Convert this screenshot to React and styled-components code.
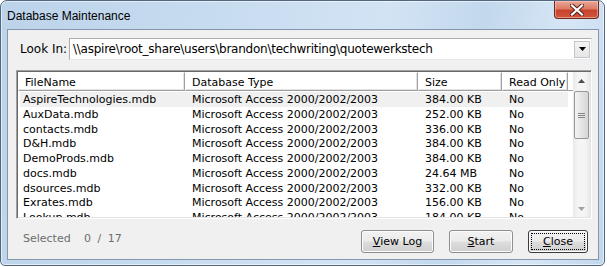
import styled, { createGlobalStyle } from "styled-components";

const GlobalStyle = createGlobalStyle`
  body {
    margin: 0;
    background: #ffffff;
  }
`;

const files = [
  { name: "AspireTechnologies.mdb", type: "Microsoft Access 2000/2002/2003", size: "384.00 KB", ro: "No" },
  { name: "AuxData.mdb", type: "Microsoft Access 2000/2002/2003", size: "252.00 KB", ro: "No" },
  { name: "contacts.mdb", type: "Microsoft Access 2000/2002/2003", size: "336.00 KB", ro: "No" },
  { name: "D&H.mdb", type: "Microsoft Access 2000/2002/2003", size: "384.00 KB", ro: "No" },
  { name: "DemoProds.mdb", type: "Microsoft Access 2000/2002/2003", size: "384.00 KB", ro: "No" },
  { name: "docs.mdb", type: "Microsoft Access 2000/2002/2003", size: "24.64 MB", ro: "No" },
  { name: "dsources.mdb", type: "Microsoft Access 2000/2002/2003", size: "332.00 KB", ro: "No" },
  { name: "Exrates.mdb", type: "Microsoft Access 2000/2002/2003", size: "156.00 KB", ro: "No" },
  { name: "Lookup.mdb", type: "Microsoft Access 2000/2002/2003", size: "184.00 KB", ro: "No" },
];

const App = () => {
  return (
    <>
      <GlobalStyle />
      <Window>
        <TitleBar>
          <Title>Database Maintenance</Title>
          <CloseCaption>
            <svg width="14" height="12" viewBox="0 0 14 12">
              <path d="M2 1.5 L12 10.5 M12 1.5 L2 10.5" stroke="#5a2418" strokeWidth="4.2" strokeLinecap="square" />
              <path d="M2 1.5 L12 10.5 M12 1.5 L2 10.5" stroke="#ffffff" strokeWidth="2.2" strokeLinecap="square" />
            </svg>
          </CloseCaption>
        </TitleBar>
        <Client>
          <LookRow>
            <Label>Look In:</Label>
            <Combo>
              <ComboText>{"\\\\aspire\\root_share\\users\\brandon\\techwriting\\quotewerkstech"}</ComboText>
              <ComboButton>
                <svg width="7" height="4" viewBox="0 0 7 4">
                  <path d="M0 0 H7 L3.5 4 Z" fill="#000" />
                </svg>
              </ComboButton>
            </Combo>
          </LookRow>
          <ListView>
            <ListMain>
              <Header>
                <HeadCell>FileName</HeadCell>
                <HeadCell>Database Type</HeadCell>
                <HeadCell>Size</HeadCell>
                <HeadCell>Read Only</HeadCell>
                <HeadFill />
              </Header>
              <Rows>
                {files.map((f, i) => (
                  <Row key={f.name} $hot={i === 0}>
                    <Cell $first>{f.name}</Cell>
                    <Cell>{f.type}</Cell>
                    <Cell>{f.size}</Cell>
                    <Cell>{f.ro}</Cell>
                  </Row>
                ))}
              </Rows>
            </ListMain>
            <ScrollBar>
              <ScrollArrow>
                <svg width="7" height="4" viewBox="0 0 7 4">
                  <path d="M0 4 H7 L3.5 0 Z" fill="#4d4d4d" />
                </svg>
              </ScrollArrow>
              <Track>
                <Thumb>
                  <Grip />
                  <Grip />
                  <Grip />
                </Thumb>
              </Track>
              <ScrollArrow>
                <svg width="7" height="4" viewBox="0 0 7 4">
                  <path d="M0 0 H7 L3.5 4 Z" fill="#a3a3a3" />
                </svg>
              </ScrollArrow>
            </ScrollBar>
          </ListView>
          <Footer>
            <Status>
              <StatusLabel>Selected</StatusLabel>
              <Count>0 / 17</Count>
            </Status>
            <Buttons>
              <Button $w={73}>
                <u>V</u>iew Log
              </Button>
              <Button $w={64}>
                <u>S</u>tart
              </Button>
              <Button $w={60} $default>
                <Focus>
                  <u>C</u>lose
                </Focus>
              </Button>
            </Buttons>
          </Footer>
        </Client>
      </Window>
    </>
  );
};

const Window = styled.div`
  width: 605px;
  height: 266px;
  box-sizing: border-box;
  border: 1px solid #536880;
  border-radius: 7px 7px 5px 5px;
  background: linear-gradient(
    100deg,
    #bcd3ea 0%,
    #c8dcf0 35%,
    #d2e3f4 60%,
    #c3d8ed 75%,
    #d6e6f5 88%,
    #c2d7ec 100%
  );
  box-shadow: inset 0 0 0 1px rgba(255, 255, 255, 0.55);
  display: flex;
  flex-direction: column;
  overflow: hidden;
`;

const TitleBar = styled.div`
  height: 28px;
  display: flex;
  align-items: flex-start;
  justify-content: space-between;
  padding: 0 5px 0 6px;
`;

const Title = styled.div`
  font-family: "Liberation Sans", Arial, sans-serif;
  font-size: 12px;
  color: #000;
  line-height: 14px;
  margin-top: 8px;
`;

const CloseCaption = styled.div`
  width: 45px;
  height: 18px;
  box-sizing: border-box;
  border: 1px solid #6b2b22;
  border-top: none;
  border-radius: 0 0 4px 4px;
  background: linear-gradient(180deg, #e9a797 0%, #dc7c66 45%, #c7432b 55%, #d0573b 100%);
  box-shadow: inset 0 0 0 1px rgba(255, 210, 200, 0.5);
  display: flex;
  align-items: center;
  justify-content: center;
`;

const Client = styled.div`
  flex: 1;
  margin: 0 5px 5px 6px;
  border: 1px solid #8496ab;
  background: #f0f0f0;
  display: flex;
  flex-direction: column;
  padding: 8px 10px 0 8px;
  font-family: "DejaVu Sans", Tahoma, sans-serif;
  font-size: 11px;
  color: #000;
`;

const LookRow = styled.div`
  display: flex;
  align-items: center;
  height: 22px;
`;

const Label = styled.div`
  margin-left: 4px;
  width: 49px;
  font-size: 12px;
`;

const Combo = styled.div`
  flex: 1;
  margin-right: -4px;
  height: 22px;
  box-sizing: border-box;
  border: 1px solid #abadb3;
  border-right-color: #e3e9ef;
  border-bottom-color: #e3e9ef;
  background: #fff;
  display: flex;
  align-items: center;
  padding: 0 1px 0 3px;
`;

const ComboText = styled.div`
  flex: 1;
  font-size: 12px;
  letter-spacing: -0.25px;
`;

const ComboButton = styled.div`
  width: 16px;
  height: 17px;
  box-sizing: border-box;
  border: 1px solid #c5c5c5;
  background: linear-gradient(180deg, #f4f4f4, #e6e6e6);
  display: flex;
  align-items: center;
  justify-content: center;
`;

const ListView = styled.div`
  margin-top: 10px;
  margin-right: -4px;
  height: 149px;
  box-sizing: border-box;
  border: 1px solid #a0a0a0;
  border-right-color: #fff;
  border-bottom-color: #fff;
  box-shadow: inset 1px 1px 0 #696969, inset -1px -1px 0 #e3e3e3;
  background: #fff;
  display: flex;
  padding: 1px;
  overflow: hidden;
`;

const ListMain = styled.div`
  flex: 1;
  overflow: hidden;
`;

const Header = styled.div`
  display: grid;
  grid-template-columns: 167px 233px 84px 66px 1fr;
  height: 19px;
`;

const HeadCell = styled.div`
  box-sizing: border-box;
  background: #ffffff;
  border-top: 1px solid #fff;
  border-left: 1px solid #fff;
  border-right: 1px solid #a0a0a0;
  border-bottom: 1px solid #a0a0a0;
  box-shadow: inset -1px -1px 0 #e3e3e3;
  padding: 2px 0 0 6px;
  line-height: 15px;
  white-space: nowrap;
`;

const HeadFill = styled.div`
  border-bottom: 1px solid #a0a0a0;
`;

const Rows = styled.div`
  padding: 1px 0 0 2px;
`;

const Row = styled.div`
  display: grid;
  grid-template-columns: 165px 233px 84px 66px;
  height: 14.75px;
  background: ${(p) => (p.$hot ? "#f0f0f0" : "transparent")};
  width: 548px;
`;

const Cell = styled.div`
  padding-left: ${(p) => (p.$first ? "3px" : "7px")};
  padding-top: 1px;
  box-sizing: border-box;
  white-space: nowrap;
  overflow: hidden;
  line-height: 13px;
`;

const ScrollBar = styled.div`
  width: 17px;
  display: flex;
  flex-direction: column;
  background: linear-gradient(90deg, #e8e8e8, #f5f5f5 30%, #f5f5f5 70%, #e8e8e8);
`;

const ScrollArrow = styled.div`
  height: 17px;
  display: flex;
  align-items: center;
  justify-content: center;
`;

const Track = styled.div`
  flex: 1;
  padding-top: 2px;
`;

const Thumb = styled.div`
  height: 48px;
  margin: 0 1px;
  box-sizing: border-box;
  border: 1px solid #979797;
  border-radius: 2px;
  background: linear-gradient(90deg, #f4f4f4, #e4e4e4 50%, #d6d6d6);
  display: flex;
  flex-direction: column;
  align-items: center;
  justify-content: center;
  gap: 1px;
`;

const Grip = styled.div`
  width: 7px;
  height: 1px;
  background: #888;
`;

const Footer = styled.div`
  display: flex;
  justify-content: space-between;
  align-items: flex-start;
  margin-top: 11px;
`;

const Status = styled.div`
  display: flex;
  color: #6d6d6d;
  margin-left: 7px;
  margin-top: 2px;
  font-size: 11px;
  line-height: 14px;
`;

const StatusLabel = styled.span`
  width: 61px;
`;

const Count = styled.span`
  word-spacing: 3px;
`;

const Buttons = styled.div`
  display: flex;
  gap: 15px;
`;

const Button = styled.div`
  width: ${(p) => p.$w}px;
  height: 23px;
  box-sizing: border-box;
  border: 1px solid ${(p) => (p.$default ? "#3c3c3c" : "#8e8f8f")};
  border-radius: 3px;
  background: linear-gradient(180deg, #f2f2f2 0%, #ebebeb 48%, #dddddd 52%, #cfcfcf 100%);
  box-shadow: inset 0 0 0 1px #fcfcfc;
  display: flex;
  align-items: center;
  justify-content: center;
  font-size: 11px;
  padding: 2px;
`;

const Focus = styled.div`
  flex: 1;
  align-self: stretch;
  border: 1px dotted #000;
  display: flex;
  align-items: center;
  justify-content: center;
`;

export default App;
